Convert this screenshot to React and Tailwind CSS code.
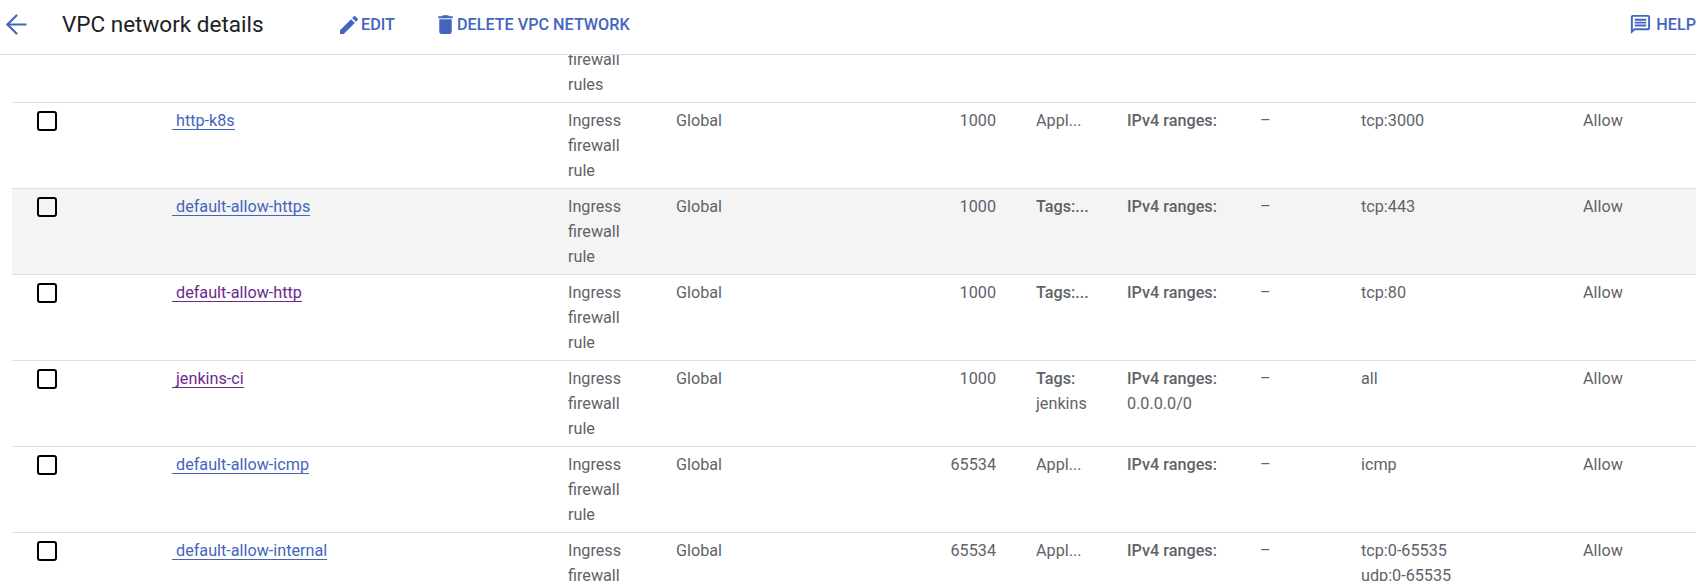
import React from 'react';
import { ArrowLeft } from 'lucide-react';
import { MdEdit, MdDelete, MdOutlineMessage } from 'react-icons/md';

const rows = [
    { name: 'http-k8s', priority: '1000', targets: 'Appl...', protocols: ['tcp:3000'] },
    { name: 'default-allow-https', priority: '1000', targets: 'Tags:...', protocols: ['tcp:443'], hover: true },
    { name: 'default-allow-http', priority: '1000', targets: 'Tags:...', protocols: ['tcp:80'], visited: true },
    { name: 'jenkins-ci', priority: '1000', targets: 'Tags:', tag: 'jenkins', range: '0.0.0.0/0', protocols: ['all'], visited: true },
    { name: 'default-allow-icmp', priority: '65534', targets: 'Appl...', protocols: ['icmp'] },
    { name: 'default-allow-internal', priority: '65534', targets: 'Appl...', protocols: ['tcp:0-65535', 'udp:0-65535'] },
];

const gridCols = 'grid grid-cols-[160px_396px_108px_180px_180px_91px_133px_101px_222px_1fr]';

const Row = ({ row }) => (
    <div className={`${gridCols} h-[86px] shrink-0 border-b border-[#e0e0e0] pt-[5px] ${row.hover ? 'bg-[#f4f4f4]' : ''}`}>
        <div className="pl-[25px] pt-[3px]">
            <div className="w-[20px] h-[20px] border-2 border-black rounded-[3px]" />
        </div>
        <div>
            <a className={`inline-block pl-[4px] h-[22px] border-b leading-[25px] ${row.visited ? 'text-[#6a2a8a] border-[#6a2a8a]' : 'text-[#4465bd] border-[#4465bd]'}`}>
                {row.name}
            </a>
        </div>
        <div>Ingress<br />firewall<br />rule</div>
        <div>Global</div>
        <div className="text-right pr-[40px]">{row.priority}</div>
        <div>
            <div className={row.targets.startsWith('Tags') ? 'font-medium' : ''}>{row.targets}</div>
            {row.tag && <div>{row.tag}</div>}
        </div>
        <div>
            <div className="font-medium">IPv4 ranges:</div>
            {row.range && <div>{row.range}</div>}
        </div>
        <div>–</div>
        <div>
            {row.protocols.map((p) => (
                <div key={p}>{p}</div>
            ))}
        </div>
        <div>Allow</div>
    </div>
);

const App = () => {
    return (
        <div className="h-[581px] overflow-hidden flex flex-col bg-white font-['Roboto',sans-serif] text-[16.2px] leading-[25px] text-[#5f6368]">
            <header className="h-[55px] shrink-0 flex items-center border-b border-[#dadce0] pb-[5px] text-[#4465bd] font-medium">
                <ArrowLeft className="ml-[1px] w-[31px] h-[31px]" strokeWidth={1.7} />
                <h1 className="ml-[30px] w-[275px] text-[22.5px] font-normal text-[#202124]">VPC network details</h1>
                <MdEdit className="w-[24px] h-[24px]" />
                <span>EDIT</span>
                <MdDelete className="ml-[38px] w-[25px] h-[25px]" />
                <span className="-ml-[1px]">DELETE VPC NETWORK</span>
                <MdOutlineMessage className="ml-auto w-[23px] h-[23px]" />
                <span className="ml-[4px]">HELP</span>
            </header>
            <div className="flex-1 overflow-hidden pl-[12px]">
                <div className={`${gridCols} h-[48px] border-b border-[#e0e0e0]`}>
                    <div className="col-start-3 -mt-[8px]">firewall<br />rules</div>
                </div>
                {rows.map((row) => (
                    <Row key={row.name} row={row} />
                ))}
            </div>
        </div>
    );
};

export default App;
